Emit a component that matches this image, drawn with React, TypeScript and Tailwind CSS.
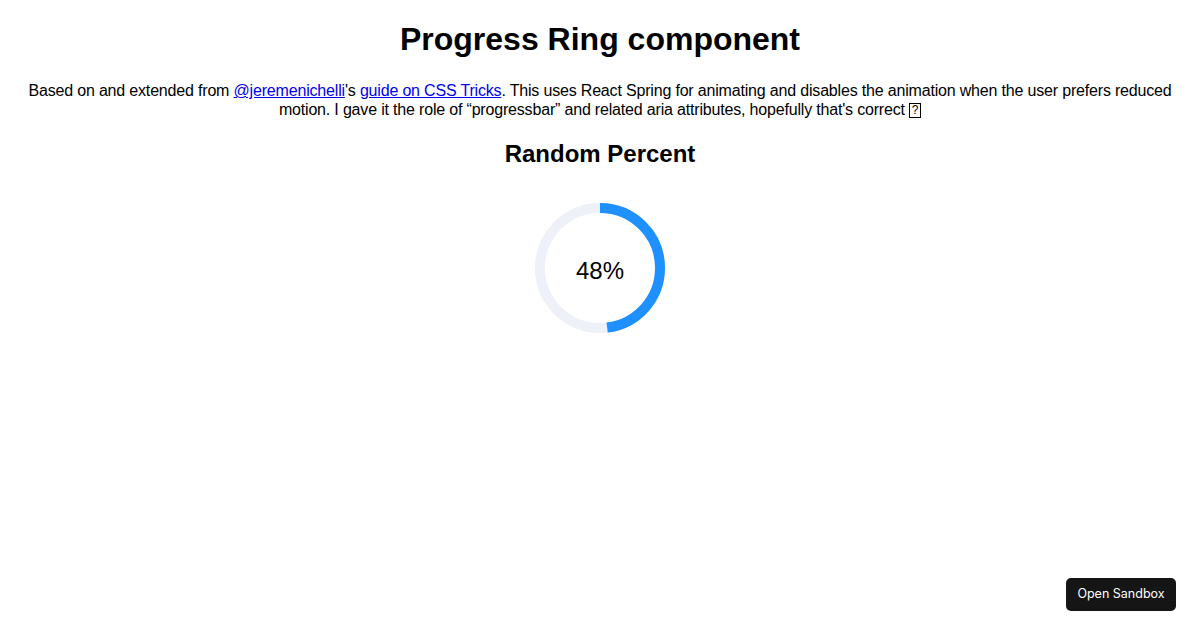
import React from 'react'

function ProgressRing({ percent, radius = 65, stroke = 10 }: { percent: number; radius?: number; stroke?: number }) {
  const r = radius - stroke / 2
  const circumference = 2 * Math.PI * r
  const offset = circumference - (percent / 100) * circumference

  return (
    <div
      role="progressbar"
      aria-valuenow={percent}
      aria-valuemin={0}
      aria-valuemax={100}
      className="relative mx-auto mt-[35px] flex h-[130px] w-[130px] items-center justify-center"
    >
      <svg width={radius * 2} height={radius * 2} className="absolute inset-0 -rotate-90">
        <circle cx={radius} cy={radius} r={r} fill="none" stroke="#eff1f8" strokeWidth={stroke} />
        <circle
          cx={radius}
          cy={radius}
          r={r}
          fill="none"
          stroke="#1e90ff"
          strokeWidth={stroke}
          strokeDasharray={`${circumference} ${circumference}`}
          strokeDashoffset={offset}
        />
      </svg>
      <span className="relative mt-[6px] text-[24px] leading-none text-black">{percent}%</span>
    </div>
  )
}

export default function App() {
  return (
    <div className="min-h-[630px] bg-white px-[12px] text-center text-black [font-family:'Liberation_Sans',Arial,sans-serif]">
      <h1 className="pt-[21.44px] pb-[23px] text-[32px] leading-[36.8px] font-bold">Progress Ring component</h1>
      <p className="text-[16px] leading-[19px] tracking-[-0.18px]">
        Based on and extended from{' '}
        <a href="#" className="text-[#0000ee] underline">@jeremenichelli</a>'s{' '}
        <a href="#" className="text-[#0000ee] underline">guide on CSS Tricks</a>. This uses React Spring for animating
        and disables the animation when the user prefers reduced motion. I gave it the role of “progressbar” and related
        aria attributes, hopefully that's correct{' '}
        <span className="inline-flex h-[15px] w-[12px] -translate-y-[1px] items-center justify-center border border-black align-middle text-[12px] leading-none tracking-normal">
          ?
        </span>
      </p>
      <h2 className="mt-[21px] text-[24px] leading-[27.6px] font-bold">Random Percent</h2>
      <ProgressRing percent={48} />

      <button className="fixed right-[24px] bottom-[19px] h-[33px] w-[110px] rounded-[5px] bg-[#151515] text-[12.5px] text-white [font-family:Inter,sans-serif]">
        Open Sandbox
      </button>
    </div>
  )
}
